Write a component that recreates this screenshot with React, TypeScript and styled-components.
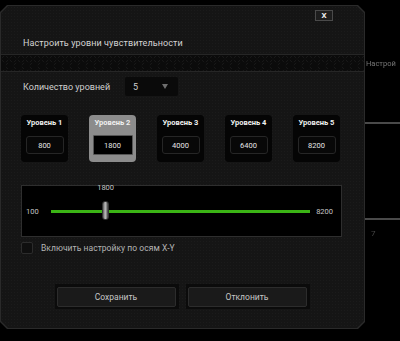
import React from 'react';
import styled, { createGlobalStyle } from 'styled-components';

const GlobalStyle = createGlobalStyle`
  html, body {
    margin: 0;
    padding: 0;
    background: #000;
  }
  body {
    font-family: Roboto, 'Liberation Sans', sans-serif;
    color: #d0d0d0;
  }
`;

const Screen = styled.div`
  width: 400px;
  height: 341px;
  overflow: hidden;
  display: flex;
  background: #000;
`;

const cut = `polygon(0 7px, 0 calc(100% - 7px), 7px 100%, calc(100% - 7px) 100%, 100% calc(100% - 7px), 100% 7px, calc(100% - 7px) 0, 7px 0)`;

const DialogFrame = styled.div`
  flex: 0 0 365px;
  height: 324px;
  margin-top: 5px;
  padding: 1px;
  box-sizing: border-box;
  background: #2a2a2a;
  clip-path: ${cut};
`;

const DialogInner = styled.div`
  height: 100%;
  display: flex;
  flex-direction: column;
  background-color: #151515;
  background-image: radial-gradient(circle, #1b1b1b 0.8px, transparent 1px);
  background-size: 3px 3px;
  clip-path: ${cut};
`;

const Header = styled.div`
  height: 48px;
  display: flex;
  flex-direction: column;
  padding: 4px 31px 0 22px;
  box-sizing: border-box;
`;

const CloseButton = styled.div`
  align-self: flex-end;
  width: 18px;
  height: 11px;
  box-sizing: border-box;
  border: 1px solid #4a4a4a;
  background: #1d1d1d;
  color: #eee;
  font-size: 8px;
  font-weight: 700;
  display: flex;
  align-items: center;
  justify-content: center;
`;

const Title = styled.div`
  margin-top: 16px;
  font-size: 9px;
  line-height: 12px;
  color: #d4d4d4;
  letter-spacing: 0.1px;
`;

const Stripe = styled.div`
  height: 18px;
  box-sizing: border-box;
  border-top: 1px solid #262626;
  border-bottom: 1px solid #262626;
  background-color: #0b0b0b;
  background-image:
    radial-gradient(circle at 4px 4px, transparent 2.6px, #1c1c1c 3px, transparent 3.6px),
    radial-gradient(circle at 8px 11px, transparent 2.6px, #1c1c1c 3px, transparent 3.6px);
  background-size: 8px 14px;
`;

const Body = styled.div`
  display: flex;
  flex-direction: column;
  padding: 5px 0 0 20px;
`;

const CountRow = styled.div`
  display: flex;
  align-items: center;
  padding-left: 2px;
`;

const Label = styled.div`
  width: 102px;
  font-size: 9px;
  color: #cfcfcf;
`;

const Dropdown = styled.div`
  width: 53px;
  height: 19px;
  box-sizing: border-box;
  padding: 0 8px;
  border-radius: 2px;
  background: #0a0a0a;
  display: flex;
  align-items: center;
  justify-content: space-between;
  font-size: 9px;
  color: #cfcfcf;
`;

const Caret = styled.span`
  width: 0;
  height: 0;
  border-left: 3.5px solid transparent;
  border-right: 3.5px solid transparent;
  border-top: 5px solid #6e6e6e;
  margin-right: 2px;
`;

const Cards = styled.div`
  display: flex;
  gap: 21px;
  margin-top: 19px;
`;

const Card = styled.div<{ $active: boolean }>`
  width: 47px;
  height: 47px;
  box-sizing: border-box;
  border-radius: 4px;
  background: ${(p) => (p.$active ? '#8c8c8c' : '#050505')};
  display: flex;
  flex-direction: column;
  align-items: center;
  padding-top: 3px;
`;

const CardLabel = styled.div`
  font-size: 7.5px;
  font-weight: 700;
  line-height: 10px;
  color: #f0f0f0;
  white-space: nowrap;
`;

const CardValue = styled.div<{ $active: boolean }>`
  margin-top: ${(p) => (p.$active ? '7px' : '8px')};
  width: ${(p) => (p.$active ? '40px' : '38px')};
  height: ${(p) => (p.$active ? '20px' : '18px')};
  box-sizing: border-box;
  border-radius: ${(p) => (p.$active ? '1px' : '3px')};
  border: 1px solid ${(p) => (p.$active ? '#555' : '#262626')};
  background: ${(p) => (p.$active ? '#000' : '#080808')};
  display: flex;
  align-items: center;
  justify-content: center;
  font-size: 7.5px;
  color: #e6e6e6;
`;

const SliderBox = styled.div`
  width: 321px;
  height: 52px;
  margin-top: 23px;
  box-sizing: border-box;
  border: 1px solid #2e2e2e;
  background: #000;
  display: flex;
  align-items: center;
  padding: 0 8px 0 4px;
`;

const SliderEnd = styled.span`
  font-size: 7.5px;
  color: #c4c4c4;
`;

const Track = styled.div`
  position: relative;
  flex: 1;
  height: 3px;
  margin: 0 6px 0 12px;
  background: #3bb415;
`;

const Thumb = styled.div`
  position: absolute;
  top: -9px;
  width: 7px;
  height: 19px;
  margin-left: -3px;
  box-sizing: border-box;
  border-radius: 3px;
  border: 1px solid #333;
  background: linear-gradient(90deg, #5a5a5a, #bdbdbd 45%, #8a8a8a 70%, #3a3a3a);
`;

const ThumbValue = styled.span`
  position: absolute;
  top: -19px;
  left: 50%;
  transform: translateX(-50%);
  font-size: 7.5px;
  color: #c4c4c4;
`;

const CheckRow = styled.div`
  display: flex;
  align-items: center;
  gap: 8px;
  margin-top: 5px;
`;

const CheckBox = styled.div`
  width: 12px;
  height: 12px;
  box-sizing: border-box;
  border: 1px solid #2c2c2c;
  border-radius: 2px;
  background: #0f0f0f;
`;

const CheckLabel = styled.span`
  font-size: 8.5px;
  letter-spacing: 0.05px;
  color: #b4b4b4;
`;

const Buttons = styled.div`
  display: flex;
  justify-content: center;
  gap: 7px;
  margin-top: 30px;
  margin-right: 1px;
`;

const ButtonFrame = styled.div`
  width: 124px;
  height: 25px;
  box-sizing: border-box;
  padding: 3px 3px 2px 2px;
  background: #0b0b0b;
`;

const Button = styled.div`
  height: 100%;
  box-sizing: border-box;
  border: 1px solid #2c2c2c;
  border-radius: 2px;
  background: #1a1a1a;
  display: flex;
  align-items: center;
  justify-content: center;
  font-size: 8.5px;
  color: #c6c6c6;
`;

const Side = styled.div`
  flex: 1;
  display: flex;
  flex-direction: column;
  padding-top: 54px;
`;

const SideStripe = styled.div`
  height: 18px;
  display: flex;
  align-items: center;
  padding-left: 1px;
  font-size: 7.5px;
  color: #777;
  filter: blur(0.6px);
  white-space: nowrap;
`;

const SideLine = styled.div<{ $top: number }>`
  height: 2px;
  margin-top: ${(p) => p.$top}px;
  background: #4a4a4a;
`;

const SideGlyph = styled.div`
  margin: 9px 0 0 6px;
  font-size: 8px;
  color: #444;
  filter: blur(0.5px);
`;

const levels = [800, 1800, 4000, 6400, 8200];
const activeIndex = 1;
const min = 100;
const max = 8200;

export default function App() {
  const value = levels[activeIndex];
  const pos = ((value - min) / (max - min)) * 100;

  return (
    <Screen>
      <GlobalStyle />
      <DialogFrame>
        <DialogInner>
          <Header>
            <CloseButton>X</CloseButton>
            <Title>Настроить уровни чувствительности</Title>
          </Header>
          <Stripe />
          <Body>
            <CountRow>
              <Label>Количество уровней</Label>
              <Dropdown>
                5
                <Caret />
              </Dropdown>
            </CountRow>
            <Cards>
              {levels.map((lvl, i) => (
                <Card key={i} $active={i === activeIndex}>
                  <CardLabel>Уровень {i + 1}</CardLabel>
                  <CardValue $active={i === activeIndex}>{lvl}</CardValue>
                </Card>
              ))}
            </Cards>
            <SliderBox>
              <SliderEnd>{min}</SliderEnd>
              <Track>
                <Thumb style={{ left: `${pos}%` }}>
                  <ThumbValue>{value}</ThumbValue>
                </Thumb>
              </Track>
              <SliderEnd>{max}</SliderEnd>
            </SliderBox>
            <CheckRow>
              <CheckBox />
              <CheckLabel>Включить настройку по осям X-Y</CheckLabel>
            </CheckRow>
          </Body>
          <Buttons>
            <ButtonFrame>
              <Button>Сохранить</Button>
            </ButtonFrame>
            <ButtonFrame>
              <Button>Отклонить</Button>
            </ButtonFrame>
          </Buttons>
        </DialogInner>
      </DialogFrame>
      <Side>
        <SideStripe>Настрой</SideStripe>
        <SideLine $top={50} />
        <SideLine $top={94} />
        <SideGlyph>7</SideGlyph>
      </Side>
    </Screen>
  );
}
